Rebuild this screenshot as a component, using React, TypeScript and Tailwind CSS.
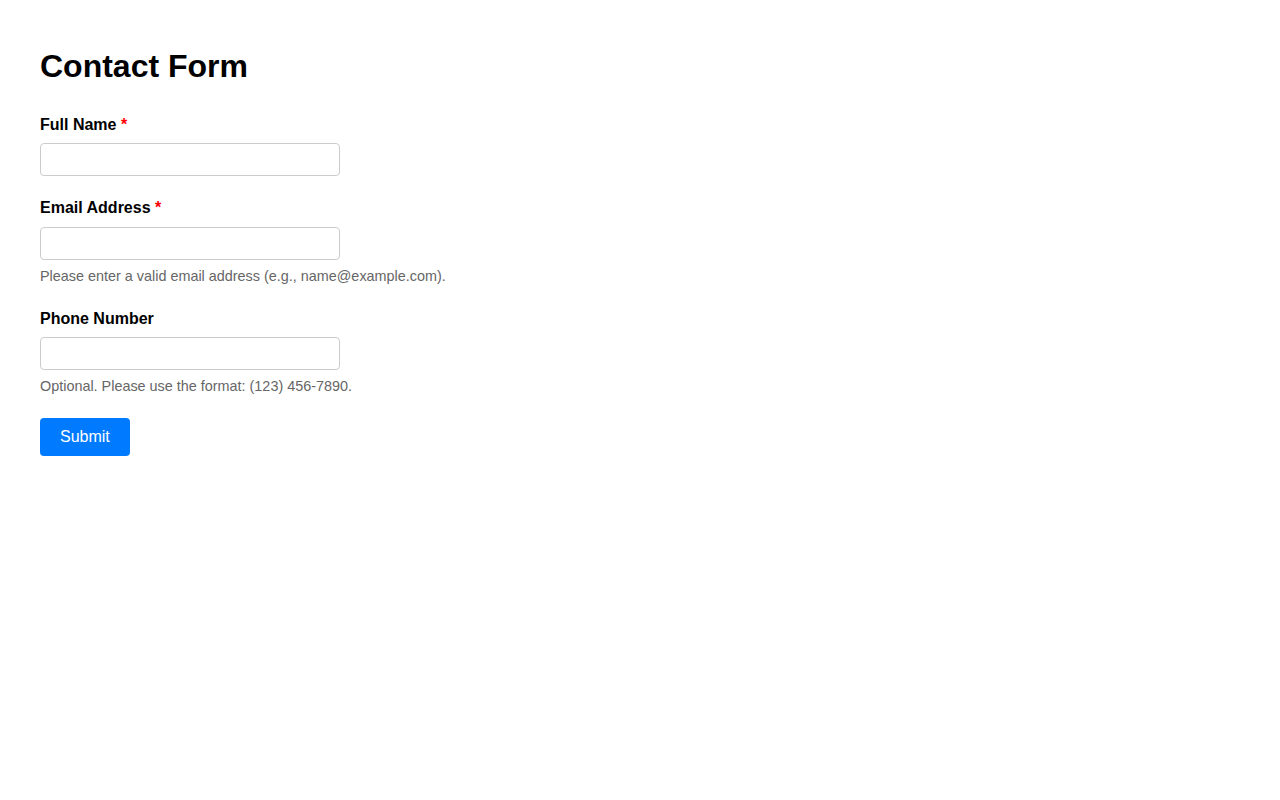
export default function App() {
  return (
    <div className="min-h-screen bg-white p-10 font-['Liberation_Sans',Arial,Helvetica,sans-serif] text-black">
      <h1 className="mt-2 mb-[30px] text-[32px] font-bold leading-[37px]">Contact Form</h1>

      <form onSubmit={(e) => e.preventDefault()}>
        <div className="mb-[23px]">
          <label htmlFor="name" className="mb-[10px] block pt-px text-base font-bold leading-[17px]">
            Full Name <span className="text-[#ff0000]">*</span>
          </label>
          <input
            id="name"
            type="text"
            className="block h-[33px] w-[300px] rounded-[4px] border border-[#cccccc] px-2 text-base outline-none"
          />
        </div>

        <div className="mb-[23px]">
          <label htmlFor="email" className="mb-[10px] block text-base font-bold leading-[18px]">
            Email Address <span className="text-[#ff0000]">*</span>
          </label>
          <input
            id="email"
            type="email"
            className="block h-[33px] w-[300px] rounded-[4px] border border-[#cccccc] px-2 text-base outline-none"
          />
          <p className="mt-[6px] text-[14.4px] leading-[20px] text-[#666666]">
            Please enter a valid email address (e.g., name@example.com).
          </p>
        </div>

        <div className="mb-[22px]">
          <label htmlFor="phone" className="mb-[10px] block pt-px text-base font-bold leading-[17px]">
            Phone Number
          </label>
          <input
            id="phone"
            type="tel"
            className="block h-[33px] w-[300px] rounded-[4px] border border-[#cccccc] px-2 text-base outline-none"
          />
          <p className="mt-[6px] text-[14.4px] leading-[20px] text-[#666666]">
            Optional. Please use the format: (123) 456-7890.
          </p>
        </div>

        <button
          type="submit"
          className="rounded-[4px] bg-[#007bff] px-5 py-[10px] text-base leading-[18px] text-white"
        >
          Submit
        </button>
      </form>
    </div>
  );
}
